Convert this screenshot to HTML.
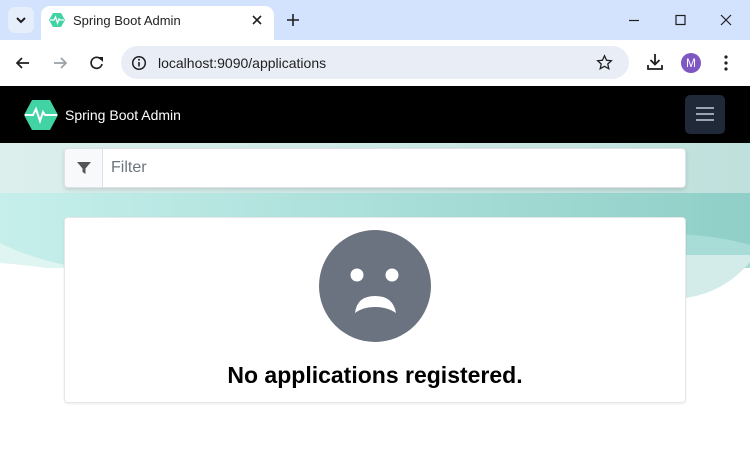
<!DOCTYPE html>
<html><head><meta charset="utf-8"><style>
*{box-sizing:border-box;margin:0;padding:0}
body{width:750px;height:459px;overflow:hidden;font-family:"Liberation Sans",sans-serif;background:#fff;position:relative}
.abs{position:absolute}
</style></head><body>
<!-- tab strip -->
<div class="abs" style="left:0;top:0;width:750px;height:40px;background:#d3e3fd"></div>
<div class="abs" style="left:8px;top:7px;width:26px;height:26px;border-radius:7px;background:#e6eefb"></div>
<svg class="abs" style="left:14px;top:14px" width="14" height="12" viewBox="0 0 14 12"><path d="M3 4l4 4 4-4" stroke="#1f1f1f" stroke-width="2" fill="none"/></svg>
<div class="abs" style="left:41px;top:6px;width:233px;height:36px;background:#fff;border-radius:9px 9px 0 0"></div>
<svg class="abs" style="left:49px;top:12px" width="16" height="16" viewBox="0 0 16 16"><polygon points="4,1 12,1 16,8 12,15 4,15 0,8" fill="#42d3a5"/><path d="M1 8h4l1.5-3 2 6 1.5-4 1 1h4" stroke="#fff" stroke-width="1.3" fill="none"/></svg>
<div class="abs" style="left:73px;top:13px;font-size:13px;color:#1f1f1f">Spring Boot Admin</div>
<svg class="abs" style="left:251px;top:14px" width="12" height="12" viewBox="0 0 12 12"><path d="M2 2l8 8M10 2l-8 8" stroke="#1f1f1f" stroke-width="1.6"/></svg>
<svg class="abs" style="left:286px;top:13px" width="14" height="14" viewBox="0 0 14 14"><path d="M7 1v12M1 7h12" stroke="#1f1f1f" stroke-width="1.6"/></svg>
<svg class="abs" style="left:627px;top:14px" width="110" height="12" viewBox="0 0 110 12"><path d="M2 6.5h10" stroke="#1f1f1f" stroke-width="1.2"/><rect x="49" y="1.5" width="9" height="9" stroke="#1f1f1f" stroke-width="1.2" fill="none"/><path d="M94 1l10 10M104 1l-10 10" stroke="#1f1f1f" stroke-width="1.2"/></svg>
<!-- toolbar -->
<div class="abs" style="left:0;top:40px;width:750px;height:46px;background:#fff"></div>
<svg class="abs" style="left:14px;top:55px" width="100" height="16" viewBox="0 0 100 16"><path d="M15 8H3M8 3L3 8l5 5" stroke="#1f1f1f" stroke-width="1.7" fill="none"/><path d="M40 8h12M47 3l5 5-5 5" stroke="#9aa0a6" stroke-width="1.7" fill="none"/><path d="M87 4.5A5.5 5.5 0 1 0 88 9" stroke="#1f1f1f" stroke-width="1.7" fill="none"/><path d="M84 2h5v5z" fill="#1f1f1f"/></svg>
<div class="abs" style="left:121px;top:46px;width:508px;height:33px;border-radius:17px;background:#e9eef6"></div>
<svg class="abs" style="left:131px;top:55px" width="16" height="16" viewBox="0 0 16 16"><circle cx="8" cy="8" r="6.3" stroke="#1f1f1f" stroke-width="1.5" fill="none"/><path d="M8 7v4.5" stroke="#1f1f1f" stroke-width="1.6"/><circle cx="8" cy="4.8" r="1" fill="#1f1f1f"/></svg>
<div class="abs" style="left:158px;top:55px;font-size:14px;color:#1f1f1f">localhost:9090/applications</div>
<svg class="abs" style="left:596px;top:54px" width="17" height="17" viewBox="0 0 24 24"><path d="M12 2.5l2.9 6.3 6.8.7-5.1 4.6 1.5 6.7L12 17.4l-6.1 3.4 1.5-6.7L2.3 9.5l6.8-.7z" stroke="#1f1f1f" stroke-width="1.8" fill="none"/></svg>
<svg class="abs" style="left:646px;top:53px" width="18" height="18" viewBox="0 0 18 18"><path d="M9 1v10M4.5 7L9 11.5 13.5 7M2 12v4h14v-4" stroke="#1f1f1f" stroke-width="1.8" fill="none"/></svg>
<div class="abs" style="left:681px;top:53px;width:20px;height:20px;border-radius:50%;background:#7e57c2;color:#fff;font-size:12px;text-align:center;line-height:20px">M</div>
<svg class="abs" style="left:724px;top:55px" width="4" height="16" viewBox="0 0 4 16"><circle cx="2" cy="2" r="1.6" fill="#1f1f1f"/><circle cx="2" cy="8" r="1.6" fill="#1f1f1f"/><circle cx="2" cy="14" r="1.6" fill="#1f1f1f"/></svg>
<!-- navbar -->
<div class="abs" style="left:0;top:86px;width:750px;height:57px;background:#000"></div>
<svg class="abs" style="left:24px;top:100px" width="34" height="30" viewBox="0 0 34 30"><polygon points="8,0 26,0 34,15 26,30 8,30 0,15" fill="#42d3a5"/><path d="M1 15h8l3-6 4 12 3-9 2 3h12" stroke="#fff" stroke-width="2" fill="none"/></svg>
<div class="abs" style="left:65px;top:107px;font-size:14px;color:#fff">Spring Boot Admin</div>
<div class="abs" style="left:685px;top:95px;width:40px;height:39px;border-radius:5px;background:#1f2937"></div>
<svg class="abs" style="left:695px;top:106px" width="20" height="16" viewBox="0 0 20 16"><path d="M1 2h18M1 8h18M1 14h18" stroke="#9ca3af" stroke-width="2"/></svg>
<!-- background -->
<svg class="abs" style="left:0;top:143px" width="750" height="316" viewBox="0 143 750 316">
<defs><linearGradient id="g" x1="0" x2="1"><stop offset="0" stop-color="#c6efeb"/><stop offset="1" stop-color="#8fcfc7"/></linearGradient>
<linearGradient id="t" x1="0" x2="1"><stop offset="0" stop-color="#dcefec"/><stop offset="0.5" stop-color="#cfe9e6"/><stop offset="1" stop-color="#bfe0dc"/></linearGradient></defs>
<rect x="0" y="143" width="750" height="50" fill="url(#t)"/>
<rect x="0" y="193" width="750" height="80" fill="url(#g)"/>
<path d="M0 243 Q30 258 70 266 L70 275 L0 275Z" fill="#def5f2"/>
<path d="M0 263 Q40 266 70 272 L70 275 L0 275Z" fill="#fff"/>
<path d="M600 233 Q700 230 750 245 L750 275 L600 275Z" fill="#a8dcd6"/>
<rect x="0" y="268" width="750" height="200" fill="#fff"/>
<path d="M600 255 L750 255 L750 262 Q725 292 686 298 L600 298Z" fill="#d3ecea"/>
</svg>
<!-- filter -->
<div class="abs" style="left:64px;top:148px;width:622px;height:40px;background:#fff;border:1px solid #dee2e6;border-radius:4px;box-shadow:0 2px 4px rgba(0,0,0,.12)"></div>
<div class="abs" style="left:65px;top:149px;width:38px;height:38px;background:#f8f9fa;border-right:1px solid #dee2e6;border-radius:4px 0 0 4px"></div>
<svg class="abs" style="left:77px;top:161px" width="14" height="14" viewBox="0 0 14 14"><path d="M0 1h14L8.5 7.5V13L5.5 11V7.5z" fill="#555"/></svg>
<div class="abs" style="left:111px;top:159px;font-size:16px;color:#6c757d">Filter</div>
<!-- card -->
<div class="abs" style="left:64px;top:217px;width:622px;height:186px;background:#fff;border:1px solid #e5e7eb;border-radius:4px;box-shadow:0 1px 2px rgba(0,0,0,.08)"></div>
<svg class="abs" style="left:319px;top:230px" width="112" height="112" viewBox="0 0 112 112"><circle cx="56" cy="56" r="56" fill="#6b7280"/><circle cx="38" cy="45" r="6.5" fill="#fff"/><circle cx="73" cy="45" r="6.5" fill="#fff"/><path d="M36 83 Q38 66 56 66 Q74 66 77 83 Q68 77 56 77 Q44 77 36 83Z" fill="#fff"/></svg>
<div class="abs" style="left:64px;top:362px;width:622px;text-align:center;font-size:23px;font-weight:bold;color:#000">No applications registered.</div>
</body></html>
